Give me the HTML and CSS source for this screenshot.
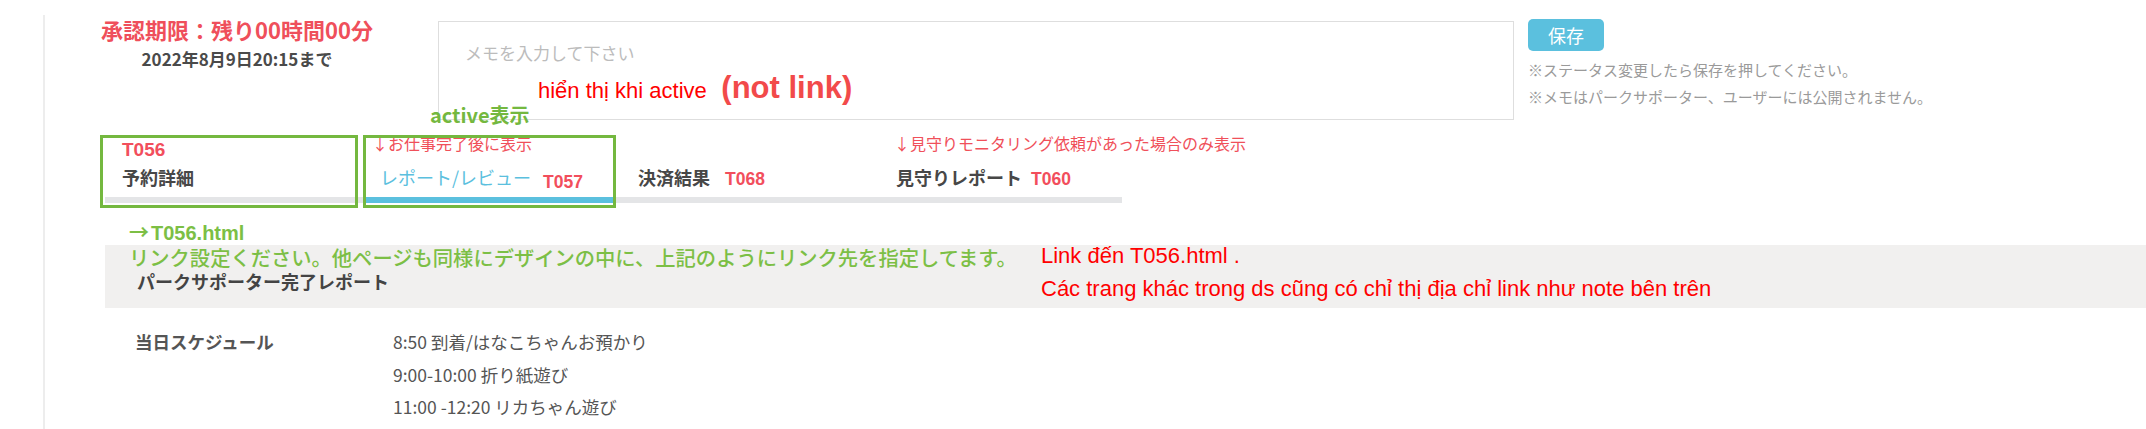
FILE: index.html
```html
<!DOCTYPE html>
<html lang="ja">
<head>
<meta charset="utf-8">
<title>レポート/レビュー</title>
<link rel="stylesheet" href="styles.css">
</head>
<body>
<div class="page">
  <div class="top">
    <div class="deadline">
      <div class="deadline-title">承認期限：残り00時間00分</div>
      <div class="deadline-date">2022年8月9日20:15まで</div>
    </div>
    <div class="memo">
      <div class="memo-placeholder">メモを入力して下さい</div>
      <div class="memo-note"><span class="vi">hiển thị khi active</span> <span class="notlink">(not link)</span></div>
    </div>
    <div class="save">
      <button class="save-btn" type="button">保存</button>
      <p class="save-note first">※ステータス変更したら保存を押してください。</p>
      <p class="save-note">※メモはパークサポーター、ユーザーには公開されません。</p>
    </div>
  </div>

  <nav class="tabs">
    <span class="anno-active">active表示</span>
    <span class="frame frame-1"></span>
    <span class="frame frame-2"></span>
    <div class="tab">
      <div class="tab-note code-note">T056</div>
      <div class="tab-row"><span class="tab-label">予約詳細</span></div>
    </div>
    <div class="tab active">
      <div class="tab-note red-note">↓お仕事完了後に表示</div>
      <div class="tab-row"><span class="tab-label">レポート/レビュー</span><span class="code code-057">T057</span></div>
    </div>
    <div class="tab">
      <div class="tab-note"></div>
      <div class="tab-row"><span class="tab-label">決済結果</span><span class="code code-068">T068</span></div>
    </div>
    <div class="tab last">
      <div class="tab-note red-note">↓見守りモニタリング依頼があった場合のみ表示</div>
      <div class="tab-row"><span class="tab-label">見守りレポート</span><span class="code code-060">T060</span></div>
    </div>
  </nav>

  <div class="link-note"><span class="arrow">→</span>T056.html</div>

  <section class="band">
    <p class="green-note">リンク設定ください。他ページも同様にデザインの中に、上記のようにリンク先を指定してます。</p>
    <h2 class="band-title">パークサポーター完了レポート</h2>
    <div class="vi-note">Link đến T056.html .<br>Các trang khác trong ds cũng có chỉ thị địa chỉ link như note bên trên</div>
  </section>

  <dl class="schedule">
    <dt>当日スケジュール</dt>
    <dd>
      <p>8:50 到着/はなこちゃんお預かり</p>
      <p>9:00-10:00 折り紙遊び</p>
      <p>11:00 -12:20 リカちゃん遊び</p>
    </dd>
  </dl>
</div>
</body>
</html>
```

FILE: styles.css
```css
html, body {
  height: 100%;
}

body {
  margin: 0;
  background: #fff;
  font-family: "Noto Sans CJK JP", "Noto Sans", sans-serif;
  color: #444;
  overflow: hidden;
}

.page {
  margin: 15px 0 0 43px;
  border-left: 2px solid #ededed;
  height: calc(100% - 15px);
  box-sizing: border-box;
}

/* ---------- top row ---------- */
.top {
  display: flex;
  align-items: flex-start;
}

.deadline {
  width: 384px;
  text-align: center;
}

.deadline-title {
  font-size: 22px;
  line-height: 28px;
  font-weight: 700;
  color: #ef4f5b;
}

.deadline-date {
  margin-top: 5px;
  font-size: 17px;
  line-height: 22px;
  font-weight: 700;
  color: #4a4a4a;
}

.memo {
  position: relative;
  margin: 6px 0 0 9px;
  width: 1076px;
  height: 99px;
  box-sizing: border-box;
  border: 1px solid #dedede;
}

.memo-placeholder {
  padding: 20px 0 0 26px;
  font-size: 17px;
  line-height: 22px;
  color: #bcbcbc;
}

.memo-note {
  position: absolute;
  left: 99px;
  top: 49px;
  line-height: 34px;
  white-space: nowrap;
}

.vi {
  font-family: "Liberation Sans Narrow", "Liberation Sans", sans-serif;
  font-size: 22px;
  color: #ff0000;
}

.notlink {
  margin-left: 11px;
  font-family: "Liberation Sans", Arial, sans-serif;
  font-size: 31px;
  font-weight: 700;
  color: #f24a4a;
}

.save {
  margin: 4px 0 0 14px;
}

.save-btn {
  display: block;
  width: 76px;
  height: 32px;
  border: 0;
  border-radius: 5px;
  background: #5bc0de;
  color: #fff;
  font-family: "Noto Sans CJK JP", sans-serif;
  font-size: 18px;
  line-height: 32px;
  padding: 0;
}

.save-note {
  margin: 0;
  font-size: 15px;
  line-height: 27px;
  color: #9a9a9a;
  white-space: nowrap;
}

.save-note.first {
  margin-top: 5px;
}

/* ---------- tabs ---------- */
.tabs {
  position: relative;
  margin: 16px 0 0 60px;
  width: 1017px;
  display: grid;
  grid-template-columns: 258px 258px 258px 243px;
}

.tab {
  position: relative;
  padding-left: 17px;
  border-bottom: 6px solid #e4e5e7;
}

.tab-note {
  height: 22px;
  line-height: 22px;
  white-space: nowrap;
}

.code-note {
  line-height: 28px;
  font-family: "Liberation Sans", Arial, sans-serif;
  font-size: 19px;
  font-weight: 700;
  color: #f24e5c;
}

.red-note {
  line-height: 14px;
  font-size: 16px;
  color: #f0505a;
  margin-left: -8px;
}

.tab.last .red-note {
  margin-left: -2px;
}

.tab-row {
  display: flex;
  align-items: baseline;
  padding: 7px 0 6px;
  line-height: 24px;
}

.tab-label {
  font-size: 18px;
  font-weight: 700;
  color: #474747;
  white-space: nowrap;
}

.tab.active .tab-label {
  font-weight: 400;
  color: #5bc0de;
}

.tab.active::after {
  content: "";
  position: absolute;
  left: 0;
  bottom: -6px;
  width: 250px;
  height: 6px;
  background: #5bc0de;
}

.code {
  font-family: "Liberation Sans", Arial, sans-serif;
  font-size: 17.5px;
  font-weight: 700;
  color: #f24e5c;
}

.code-057 {
  margin-left: 12px;
  position: relative;
  top: 3px;
}

.code-068 {
  margin-left: 15px;
}

.code-060 {
  margin-left: 9px;
}

.frame {
  position: absolute;
  top: -1px;
  height: 73px;
  box-sizing: border-box;
  border: 3px solid #74b83f;
  pointer-events: none;
  z-index: 2;
}

.frame-1 {
  left: -5px;
  width: 258px;
}

.frame-2 {
  left: 258px;
  width: 253px;
}

.anno-active {
  position: absolute;
  left: 325px;
  top: -33px;
  font-size: 20px;
  line-height: 24px;
  font-weight: 700;
  color: #74b83f;
  white-space: nowrap;
}

/* ---------- link note ---------- */
.link-note {
  margin: 17px 0 0 84px;
  font-family: "Liberation Sans", Arial, sans-serif;
  font-size: 20px;
  line-height: 24px;
  font-weight: 700;
  color: #7cbf45;
}

.arrow {
  font-family: "Noto Sans CJK JP", sans-serif;
  margin-right: 2px;
}

/* ---------- band ---------- */
.band {
  position: relative;
  margin-left: 60px;
  height: 63px;
  padding-left: 24px;
  background: #f1f0ef;
}

.green-note {
  margin: 0;
  font-size: 20.3px;
  line-height: 24px;
  font-weight: 500;
  color: #7cbf45;
  white-space: nowrap;
}

.band-title {
  margin: 0 0 0 8px;
  font-size: 18px;
  line-height: 24px;
  font-weight: 700;
  color: #444;
}

.vi-note {
  position: absolute;
  left: 936px;
  top: -6px;
  font-family: "Liberation Sans Narrow", "Liberation Sans", sans-serif;
  font-size: 22px;
  line-height: 33px;
  color: #ff0000;
  white-space: nowrap;
}

/* ---------- schedule ---------- */
.schedule {
  display: grid;
  grid-template-columns: 258px auto;
  margin: 18px 0 0 90px;
}

.schedule dt {
  font-size: 17.5px;
  line-height: 32.5px;
  font-weight: 700;
  color: #555;
}

.schedule dd {
  margin: 0;
}

.schedule dd p {
  margin: 0;
  font-size: 17.5px;
  line-height: 32.5px;
  color: #555;
}
```
